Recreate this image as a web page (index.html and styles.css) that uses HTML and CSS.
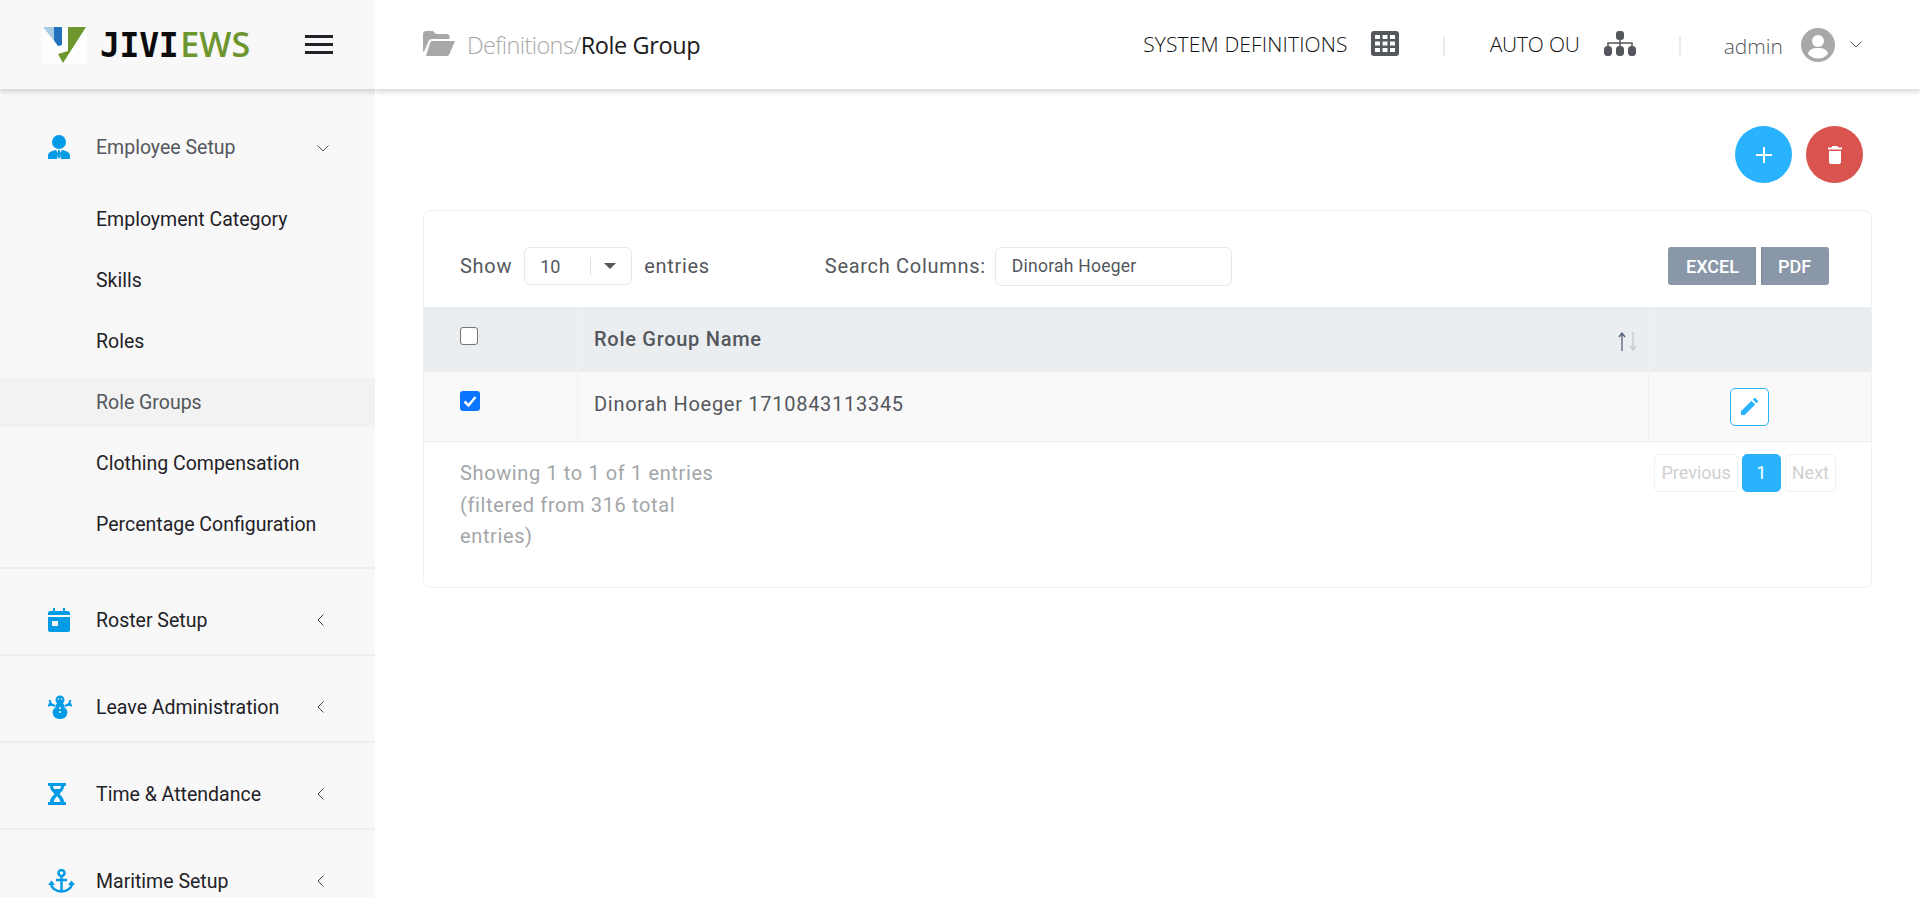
FILE: index.html
```html
<!DOCTYPE html>
<html lang="en">
<head>
<meta charset="utf-8">
<title>Role Group</title>
<link rel="stylesheet" href="styles.css">
</head>
<body>
<div class="app">
  <aside class="sidebar">
    <div class="brand">
      <div class="logo">
        <svg viewBox="0 0 45 38" width="45" height="38">
          <rect width="45" height="38" fill="#fdfdfd"/>
          <path d="M1 1H20V19L16 20Z" fill="#a9cbe2"/>
          <path d="M12 1H20V19L16 20L12 14Z" fill="#2272bd"/>
          <path d="M26 1H44L21 37L16 28L26 25Z" fill="#6d962f"/>
        </svg>
      </div>
      <div class="wordmark"><span class="wm-dark">JIVI</span><span class="wm-green">EWS</span></div>
      <div class="burger"><i></i><i></i><i></i></div>
    </div>
    <nav class="nav">
      <div class="group open">
        <div class="nav-head first">
          <svg class="nav-ico" viewBox="0 0 22 24"><circle cx="11" cy="7" r="7" fill="#039be5"/><path d="M0 24V20.500C0 17.500 4 15.500 8 15L10 18L9 24ZM22 24V20.500C22 17.500 18 15.500 14 15L12 18L13 24Z" fill="#039be5"/><path d="M10 15H12V17L12.500 21L11 24L9.500 21L10 17Z" fill="#039be5"/></svg>
          <span class="nav-label muted">Employee Setup</span>
          <svg class="chev-down" viewBox="0 0 12 7"><path d="M.5.500L6 6L11.500.500" fill="none" stroke="#555" stroke-width="1"/></svg>
        </div>
        <ul class="sub">
          <li>Employment Category</li>
          <li>Skills</li>
          <li>Roles</li>
          <li class="active">Role Groups</li>
          <li>Clothing Compensation</li>
          <li>Percentage Configuration</li>
        </ul>
      </div>
      <div class="group">
        <div class="nav-head">
          <svg class="nav-ico" viewBox="0 0 22 24"><path d="M2 3H5V0H7V3H15V0H17V3H20C21 3 22 4 22 5V7H0V5C0 4 1 3 2 3ZM0 9H22V22C22 23 21 24 20 24H2C1 24 0 23 0 22ZM4 13V18H10V13Z" fill="#039be5" fill-rule="evenodd"/></svg>
          <span class="nav-label">Roster Setup</span>
          <svg class="chev-left" viewBox="0 0 7 12"><path d="M6.500.500L1 6L6.500 11.500" fill="none" stroke="#444" stroke-width="1"/></svg>
        </div>
      </div>
      <div class="group">
        <div class="nav-head">
          <svg class="nav-ico wide" viewBox="0 0 24 24"><circle cx="12" cy="5" r="4.500" fill="#039be5"/><path d="M12 8C15.500 8 17 10 16.500 12.500C19 14 20 16.500 19 19.500C18 22.500 15.500 24 12 24S6 22.500 5 19.500C4 16.500 5 14 7.500 12.500C7 10 8.500 8 12 8Z" fill="#039be5"/><path d="M7 11L1 8M17 11L23 8M3 9L1.500 5M3 9L0 11M21 9L22.500 5M21 9L24 11" stroke="#039be5" stroke-width="2" fill="none"/><circle cx="12" cy="13" r="1" fill="#f8f8f8"/><circle cx="12" cy="17" r="1" fill="#f8f8f8"/><circle cx="10.500" cy="4" r=".8" fill="#f8f8f8"/><circle cx="13.500" cy="4" r=".8" fill="#f8f8f8"/></svg>
          <span class="nav-label">Leave Administration</span>
          <svg class="chev-left" viewBox="0 0 7 12"><path d="M6.500.500L1 6L6.500 11.500" fill="none" stroke="#444" stroke-width="1"/></svg>
        </div>
      </div>
      <div class="group">
        <div class="nav-head">
          <svg class="nav-ico narrow" viewBox="0 0 18 22"><path d="M0 0H18V3H16C16 7 13 9 11.500 11C13 13 16 15 16 19H18V22H0V19H2C2 15 5 13 6.500 11C5 9 2 7 2 3H0ZM5 3C5 4 5.500 5 6 6H12C12.500 5 13 4 13 3ZM9 13C7.500 15 6 16.500 5.500 19H12.500C12 16.500 10.500 15 9 13Z" fill="#039be5" fill-rule="evenodd"/></svg>
          <span class="nav-label">Time &amp; Attendance</span>
          <svg class="chev-left" viewBox="0 0 7 12"><path d="M6.500.500L1 6L6.500 11.500" fill="none" stroke="#444" stroke-width="1"/></svg>
        </div>
      </div>
      <div class="group">
        <div class="nav-head">
          <svg class="nav-ico anchor" viewBox="0 0 27 24"><circle cx="13.500" cy="4" r="3" fill="none" stroke="#039be5" stroke-width="2.500"/><path d="M13.500 7V23M8 11H19" stroke="#039be5" stroke-width="2.500" fill="none"/><path d="M3 14C3 19 8 22.500 13.500 22.500S24 19 24 14" fill="none" stroke="#039be5" stroke-width="2.500"/><path d="M0 16L3.500 11.500L7 16ZM20 16L23.500 11.500L27 16Z" fill="#039be5"/></svg>
          <span class="nav-label">Maritime Setup</span>
          <svg class="chev-left" viewBox="0 0 7 12"><path d="M6.500.500L1 6L6.500 11.500" fill="none" stroke="#444" stroke-width="1"/></svg>
        </div>
      </div>
    </nav>
  </aside>
  <div class="content">
    <header class="topbar">
      <div class="crumbs">
        <svg class="folder" viewBox="0 0 32 25"><path d="M0 3C0 1.500 1 0 3 0H10L13 3H24C25.500 3 26.500 4 26.500 5.500V8H9C7 8 6 9 5.400 10.500L1 21L0 20ZM9 10H32L26.500 23C26 24.300 25 25 23.500 25H3L7 12C7.400 10.700 8 10 9 10Z" fill="#a6a8aa"/></svg>
        <span class="crumb-dim">Definitions/</span><span class="crumb-cur">Role Group</span>
      </div>
      <div class="top-right">
        <span class="top-link">SYSTEM DEFINITIONS</span>
        <svg class="ico-grid" viewBox="0 0 28 25"><rect width="28" height="25" rx="3" fill="#54575c"/><g fill="#fff"><rect x="4" y="4" width="5" height="4"/><rect x="11.500" y="4" width="5" height="4"/><rect x="19" y="4" width="5" height="4"/><rect x="4" y="10.500" width="5" height="4"/><rect x="11.500" y="10.500" width="5" height="4"/><rect x="19" y="10.500" width="5" height="4"/><rect x="4" y="17" width="5" height="4"/><rect x="11.500" y="17" width="5" height="4"/><rect x="19" y="17" width="5" height="4"/></g></svg>
        <span class="vsep"></span>
        <span class="top-link narrow-link">AUTO OU</span>
        <svg class="ico-org" viewBox="0 0 32 25"><g fill="#54575c"><rect x="12" y="0" width="8" height="9" rx="3"/><rect x="0" y="15" width="8" height="10" rx="3.500"/><rect x="12" y="15" width="8" height="10" rx="3.500"/><rect x="24" y="15" width="8" height="10" rx="3.500"/></g><path d="M16 9V15M4 15V12H28V15" fill="none" stroke="#54575c" stroke-width="1.500"/></svg>
        <span class="vsep second"></span>
        <span class="user">admin</span>
        <svg class="avatar" viewBox="0 0 34 34"><circle cx="17" cy="17" r="17" fill="#a6a8aa"/><circle cx="17" cy="13" r="6" fill="#fff"/><path d="M7 26C8 21 12 20 17 20S26 21 27 26C24 29 21 30.500 17 30.500S10 29 7 26Z" fill="#fff"/></svg>
        <svg class="chev-user" viewBox="0 0 12 7"><path d="M.5.500L6 6L11.500.500" fill="none" stroke="#555" stroke-width="1"/></svg>
      </div>
    </header>
    <main class="main">
      <div class="actions">
        <button class="fab add"><svg viewBox="0 0 16 16" width="16" height="16"><path d="M8 0V16M0 8H16" stroke="#fff" stroke-width="2"/></svg></button>
        <button class="fab del"><svg viewBox="0 0 14 18" width="14" height="18"><path d="M4.500 0H9.500L10.500 1.500H14V3.500H0V1.500H3.500ZM1 5H13V16C13 17 12 18 11 18H3C2 18 1 17 1 16Z" fill="#fff"/></svg></button>
      </div>
      <section class="card">
        <div class="toolbar">
          <span class="lbl">Show</span>
          <div class="select"><span class="sel-val">10</span><span class="sel-sep"></span><span class="caret"></span></div>
          <span class="lbl">entries</span>
          <span class="lbl search-lbl">Search Columns:</span>
          <div class="search">Dinorah Hoeger</div>
          <div class="exports"><button class="exp excel">EXCEL</button><button class="exp pdf">PDF</button></div>
        </div>
        <div class="thead">
          <div class="c-check"><span class="cb"></span></div>
          <div class="c-name head-name">Role Group Name
            <svg class="sort" viewBox="0 0 19 19" width="19" height="19"><path d="M4 19V1M1 5L4 1L7 5" fill="none" stroke="#54617a" stroke-width="1.300"/><path d="M15 0V18M12 14L15 18L18 14" fill="none" stroke="#c4c7cb" stroke-width="1.300"/></svg>
          </div>
          <div class="c-act"></div>
        </div>
        <div class="trow">
          <div class="c-check"><span class="cb checked"><svg viewBox="0 0 20 20" width="20" height="20"><path d="M4.500 10.500L8.500 14.500L15.500 6" fill="none" stroke="#fff" stroke-width="2.500"/></svg></span></div>
          <div class="c-name">Dinorah Hoeger 1710843113345</div>
          <div class="c-act"><button class="edit"><svg viewBox="0 0 18 18" width="17" height="17"><path d="M0 18V14L11 3L15 7L4 18ZM12.500 1.500L14 0H15L18 3V4L16.500 5.500Z" fill="#29b3ff"/></svg></button></div>
        </div>
        <div class="tfoot">
          <div class="info">Showing 1 to 1 of 1 entries<br>(filtered from 316 total<br>entries)</div>
          <div class="pager"><span class="pg">Previous</span><span class="pg cur">1</span><span class="pg">Next</span></div>
        </div>
      </section>
    </main>
  </div>
</div>
</body>
</html>
```
FILE: styles.css
```css
* { box-sizing: border-box; }
html, body { margin: 0; height: 100%; overflow: hidden; }
body { background: #fff; font-family: Roboto, sans-serif; color: #54575c; }
.app { display: flex; height: 897px; overflow: hidden; }

.sidebar { width: 375px; flex: none; background: #f8f8f8; overflow: hidden; }
.brand { height: 89px; display: flex; align-items: center; padding-left: 42px; background: #f8f8f8; box-shadow: 0 2px 6px rgba(0,0,0,.2); position: relative; }
.logo { width: 45px; height: 38px; margin-right: 13px; }
.logo svg { display: block; }
.wordmark { width: 205px; line-height: 1; white-space: nowrap; }
.wm-dark { font-family: "DejaVu Sans Mono", monospace; font-weight: 700; color: #0b0b0b; letter-spacing: -.3px; font-size: 33px; }
.wm-green { font-family: "Open Sans", sans-serif; color: #6d962f; font-size: 34px; font-weight: 600; margin-left: 2px; }
.burger { width: 28px; display: flex; flex-direction: column; gap: 5px; }
.burger i { display: block; height: 3px; background: #1f2227; }

.nav { display: flex; flex-direction: column; }
.group { border-bottom: 2px solid #eeeeee; }
.group:last-child { border-bottom: 0; }
.nav-head { height: 85px; padding-top: 17px; display: flex; align-items: center; padding-left: 48px; color: #1f2227; }
.nav-head.first { height: 106px; padding-top: 10px; }
.nav-ico { width: 22px; height: 24px; flex: none; margin-right: 26px; }
.nav-ico.wide { width: 24px; margin-right: 24px; }
.nav-ico.narrow { width: 18px; height: 22px; margin-right: 30px; }
.nav-ico.anchor { width: 27px; height: 24px; margin-right: 21px; }
.nav-label { font-size: 19.500px; width: 221px; white-space: nowrap; line-height: 21px; }
.nav-label.muted { color: #54575c; }
.chev-down { width: 12px; height: 7px; flex: none; margin-top: 3px; }
.chev-left { width: 7px; height: 12px; flex: none; }
.sub { list-style: none; margin: 0; padding: 0 0 18px; }
.sub li { height: 49px; margin-bottom: 12px; padding-left: 96px; font-size: 19.500px; line-height: 49px; color: #1f2227; }
.sub li:last-child { margin-bottom: 0; }
.sub li.active { background: #f2f2f2; color: #54575c; }

.content { flex: 1; min-width: 0; }
.topbar { height: 89px; display: flex; align-items: center; justify-content: space-between; padding: 0 58px 0 48px; background: #fff; box-shadow: 0 2px 6px rgba(0,0,0,.2); font-family: "Open Sans", sans-serif; }
.crumbs { display: flex; align-items: center; font-size: 23.500px; }
.folder { width: 32px; height: 25px; margin-right: 12px; margin-bottom: 2px; }
.crumb-dim { color: #a8a8a8; font-weight: 300; letter-spacing: -.6px; }
.crumb-cur { color: #1a1a1a; font-weight: 400; letter-spacing: -.4px; }
.top-right { display: flex; align-items: center; }
.top-link { font-size: 21px; font-weight: 300; color: #111; letter-spacing: .15px; white-space: nowrap; margin-bottom: 1px; }
.narrow-link { letter-spacing: -.2px; }
.ico-grid { width: 28px; height: 25px; margin-left: 23px; margin-bottom: 2px; }
.vsep { width: 2px; height: 20px; background: #eaeaea; margin: 2px 45px 0 44px; }
.ico-org { width: 32px; height: 25px; margin-left: 24px; margin-bottom: 2px; }
.vsep.second { margin: 2px 43px 0 43px; }
.user { font-size: 21px; font-weight: 300; color: #54575c; margin-right: 18px; margin-top: 3px; }
.avatar { width: 34px; height: 34px; margin-right: 15px; }
.chev-user { width: 12px; height: 7px; }

.main { padding: 37px 48px 0 48px; }
.actions { display: flex; justify-content: flex-end; gap: 14px; height: 57px; margin-right: 9px; }
.fab { width: 57px; height: 57px; border-radius: 50%; border: 0; padding: 0; display: flex; align-items: center; justify-content: center; }
.fab.add { background: #29b3ff; }
.fab.del { background: #d9534f; }

.card { margin-top: 27px; width: 1449px; height: 378px; background: #fff; border: 1px solid #eef0f2; border-radius: 8px; }
.toolbar { height: 96px; padding: 14px 42px 0 36px; display: flex; align-items: center; font-size: 20px; }
.lbl { color: #54575c; letter-spacing: .7px; white-space: nowrap; }
.select { width: 108px; height: 38px; border: 1px solid #e8e8e8; border-radius: 6px; margin: 0 12px; display: flex; align-items: center; padding-left: 15px; font-size: 18px; }
.sel-val { width: 50px; }
.sel-sep { width: 1px; height: 18px; background: #ddd; }
.caret { margin-left: 13px; width: 0; height: 0; border-left: 6px solid transparent; border-right: 6px solid transparent; border-top: 6px solid #54575c; }
.search-lbl { margin-left: 115px; }
.search { width: 237px; height: 39px; border: 1px solid #e8e8e8; border-radius: 6px; margin-left: 9px; padding-left: 16px; font-size: 17.500px; line-height: 37px; letter-spacing: .25px; }
.exports { margin-left: auto; display: flex; gap: 5px; }
.exp { height: 38px; border: 0; border-right: 1px solid #7f8a9a; border-radius: 3px 0 0 3px; background: #8a97a9; color: #fff; font: 500 18px Roboto, sans-serif; padding: 0 0 0 2px; }
.exp.excel { width: 88px; }
.exp.pdf { width: 68px; border-right: 0; border-left: 1px solid #7f8a9a; border-radius: 0 3px 3px 0; padding: 0 2px 0 0; }

.thead, .trow { display: flex; }
.thead { height: 65px; background: #ebeef1; }
.trow { height: 70px; background: #f9f9f9; border-bottom: 1px solid #eceef0; }
.c-check { width: 154px; padding: 20px 0 0 36px; border-right: 1px solid #f0f1f3; }
.c-name { flex: 1; padding-left: 16px; font-size: 20px; line-height: 64px; letter-spacing: .72px; position: relative; }
.head-name { font-weight: 500; line-height: 64px; }
.c-act { width: 223px; border-left: 1px solid #f0f1f3; display: flex; align-items: center; justify-content: center; padding-right: 21px; }
.cb { display: block; width: 18px; height: 18px; border: 1.500px solid #767676; border-radius: 3px; background: #fff; }
.cb.checked { width: 20px; height: 20px; border: 0; background: #0a75ff; margin-top: -1px; }
.cb svg { display: block; }
.sort { position: absolute; right: 11px; top: 25px; }
.edit { width: 39px; height: 38px; border: 1px solid #29b3ff; border-radius: 5px; background: #fff; padding: 0; display: flex; align-items: center; justify-content: center; }

.tfoot { display: flex; justify-content: space-between; padding: 12px 36px 0 36px; }
.info { color: #a3a6a9; font-size: 20px; line-height: 31.500px; letter-spacing: .62px; padding-top: 4px; }
.pager { display: flex; gap: 4px; height: 38px; margin-right: -1px; }
.pg { height: 38px; border: 1px solid #f0f0f0; border-radius: 5px; color: #d0d0d0; font-size: 18px; line-height: 36px; padding: 0 6px; }
.pg.cur { width: 39px; background: #29b3ff; border-color: #29b3ff; color: #fff; text-align: center; }
```
